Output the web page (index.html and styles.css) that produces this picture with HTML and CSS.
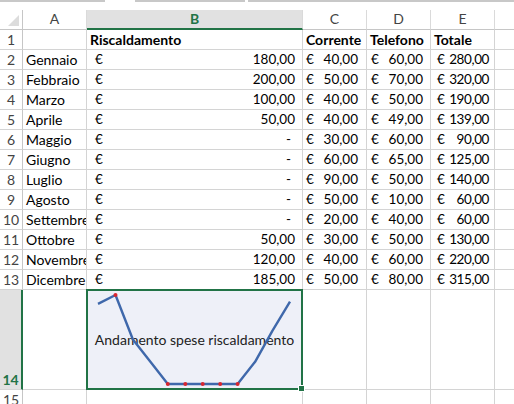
FILE: index.html
```html
<!DOCTYPE html>
<html lang="it">
<head>
<meta charset="utf-8">
<title>Foglio spese</title>
<link rel="stylesheet" href="styles.css">
</head>
<body>
<div class="topbar">
  <span class="seg seg1"></span>
  <span class="seg seg2"></span>
  <span class="seg seg3"></span>
</div>
<div class="sheet">
  <div class="corner"><span class="tri"></span></div>
  <div class="colhdr">A</div>
  <div class="colhdr sel">B</div>
  <div class="colhdr">C</div>
  <div class="colhdr">D</div>
  <div class="colhdr">E</div>
  <div class="colhdr last"></div>

  <div class="rowhdr">1</div>
  <div class="cell txt"></div>
  <div class="cell txt bold">Riscaldamento</div>
  <div class="cell txt bold">Corrente</div>
  <div class="cell txt bold">Telefono</div>
  <div class="cell txt bold">Totale</div>
  <div class="cell last"></div>

  <div class="rowhdr">2</div>
  <div class="cell txt">Gennaio</div>
  <div class="cell acc b"><span>€</span><span>180,00</span></div>
  <div class="cell acc c"><span>€</span><span>40,00</span></div>
  <div class="cell acc d"><span>€</span><span>60,00</span></div>
  <div class="cell acc e"><span>€</span><span>280,00</span></div>
  <div class="cell last"></div>

  <div class="rowhdr">3</div>
  <div class="cell txt">Febbraio</div>
  <div class="cell acc b"><span>€</span><span>200,00</span></div>
  <div class="cell acc c"><span>€</span><span>50,00</span></div>
  <div class="cell acc d"><span>€</span><span>70,00</span></div>
  <div class="cell acc e"><span>€</span><span>320,00</span></div>
  <div class="cell last"></div>

  <div class="rowhdr">4</div>
  <div class="cell txt">Marzo</div>
  <div class="cell acc b"><span>€</span><span>100,00</span></div>
  <div class="cell acc c"><span>€</span><span>40,00</span></div>
  <div class="cell acc d"><span>€</span><span>50,00</span></div>
  <div class="cell acc e"><span>€</span><span>190,00</span></div>
  <div class="cell last"></div>

  <div class="rowhdr">5</div>
  <div class="cell txt">Aprile</div>
  <div class="cell acc b"><span>€</span><span>50,00</span></div>
  <div class="cell acc c"><span>€</span><span>40,00</span></div>
  <div class="cell acc d"><span>€</span><span>49,00</span></div>
  <div class="cell acc e"><span>€</span><span>139,00</span></div>
  <div class="cell last"></div>

  <div class="rowhdr">6</div>
  <div class="cell txt">Maggio</div>
  <div class="cell acc b"><span>€</span><span class="dash">-</span></div>
  <div class="cell acc c"><span>€</span><span>30,00</span></div>
  <div class="cell acc d"><span>€</span><span>60,00</span></div>
  <div class="cell acc e"><span>€</span><span>90,00</span></div>
  <div class="cell last"></div>

  <div class="rowhdr">7</div>
  <div class="cell txt">Giugno</div>
  <div class="cell acc b"><span>€</span><span class="dash">-</span></div>
  <div class="cell acc c"><span>€</span><span>60,00</span></div>
  <div class="cell acc d"><span>€</span><span>65,00</span></div>
  <div class="cell acc e"><span>€</span><span>125,00</span></div>
  <div class="cell last"></div>

  <div class="rowhdr">8</div>
  <div class="cell txt">Luglio</div>
  <div class="cell acc b"><span>€</span><span class="dash">-</span></div>
  <div class="cell acc c"><span>€</span><span>90,00</span></div>
  <div class="cell acc d"><span>€</span><span>50,00</span></div>
  <div class="cell acc e"><span>€</span><span>140,00</span></div>
  <div class="cell last"></div>

  <div class="rowhdr">9</div>
  <div class="cell txt">Agosto</div>
  <div class="cell acc b"><span>€</span><span class="dash">-</span></div>
  <div class="cell acc c"><span>€</span><span>50,00</span></div>
  <div class="cell acc d"><span>€</span><span>10,00</span></div>
  <div class="cell acc e"><span>€</span><span>60,00</span></div>
  <div class="cell last"></div>

  <div class="rowhdr">10</div>
  <div class="cell txt">Settembre</div>
  <div class="cell acc b"><span>€</span><span class="dash">-</span></div>
  <div class="cell acc c"><span>€</span><span>20,00</span></div>
  <div class="cell acc d"><span>€</span><span>40,00</span></div>
  <div class="cell acc e"><span>€</span><span>60,00</span></div>
  <div class="cell last"></div>

  <div class="rowhdr">11</div>
  <div class="cell txt">Ottobre</div>
  <div class="cell acc b"><span>€</span><span>50,00</span></div>
  <div class="cell acc c"><span>€</span><span>30,00</span></div>
  <div class="cell acc d"><span>€</span><span>50,00</span></div>
  <div class="cell acc e"><span>€</span><span>130,00</span></div>
  <div class="cell last"></div>

  <div class="rowhdr">12</div>
  <div class="cell txt">Novembre</div>
  <div class="cell acc b"><span>€</span><span>120,00</span></div>
  <div class="cell acc c"><span>€</span><span>40,00</span></div>
  <div class="cell acc d"><span>€</span><span>60,00</span></div>
  <div class="cell acc e"><span>€</span><span>220,00</span></div>
  <div class="cell last"></div>

  <div class="rowhdr">13</div>
  <div class="cell txt">Dicembre</div>
  <div class="cell acc b"><span>€</span><span>185,00</span></div>
  <div class="cell acc c"><span>€</span><span>50,00</span></div>
  <div class="cell acc d"><span>€</span><span>80,00</span></div>
  <div class="cell acc e"><span>€</span><span>315,00</span></div>
  <div class="cell last"></div>

  <div class="rowhdr selrow">14</div>
  <div class="cell"></div>
  <div class="cell spark">
    <span class="spark-title">Andamento spese riscaldamento</span>
    <svg class="spark-svg" width="214" height="98" viewBox="0 0 214 98">
      <polyline fill="none" stroke="#3f68ab" stroke-width="2.4" stroke-linejoin="round"
        points="11,13.9 28.5,5 45.9,49.5 63.4,71.8 80.8,94 98.3,94 115.7,94 133.2,94 150.6,94 168.1,71.8 185.5,40.6 203,11.7"/>
      <g fill="#d9262e">
        <circle cx="28.5" cy="5" r="2"/>
        <circle cx="80.8" cy="94" r="2"/>
        <circle cx="98.3" cy="94" r="2"/>
        <circle cx="115.7" cy="94" r="2"/>
        <circle cx="133.2" cy="94" r="2"/>
        <circle cx="150.6" cy="94" r="2"/>
      </g>
    </svg>
    <span class="selbox"></span>
    <span class="handle"></span>
  </div>
  <div class="cell"></div>
  <div class="cell"></div>
  <div class="cell"></div>
  <div class="cell last"></div>

  <div class="rowhdr">15</div>
  <div class="cell"></div>
  <div class="cell"></div>
  <div class="cell"></div>
  <div class="cell"></div>
  <div class="cell"></div>
  <div class="cell last"></div>
</div>
</body>
</html>
```
FILE: styles.css
```css
html, body {
  margin: 0;
  padding: 0;
  background: #ffffff;
}
body {
  font-family: Lato, "Liberation Sans", sans-serif;
  font-size: 14px;
  color: #000;
  overflow: hidden;
}
.topbar {
  display: flex;
  height: 10px;
  gap: 0;
}
.seg {
  display: block;
  height: 2px;
  background: #c8c8c8;
}
.seg1 { width: 105px; }
.seg2 { width: 110px; margin-left: 30px; }
.seg3 { flex: 1; margin-left: 3px; }

.sheet {
  display: grid;
  grid-template-columns: 23px 64px 216px 64px 64px 64px 1fr;
  grid-template-rows: 20px repeat(13, 20px) 100px 20px;
}
.sheet > div {
  box-sizing: border-box;
  min-width: 0;
}
.corner {
  border-right: 1px solid #c6c6c6;
  border-bottom: 1px solid #c6c6c6;
  position: relative;
}
.tri {
  position: absolute;
  right: 3px;
  bottom: 3px;
  width: 0;
  height: 0;
  border-left: 11px solid transparent;
  border-bottom: 11px solid #dcdcdc;
}
.colhdr {
  border-right: 1px solid #dadada;
  border-bottom: 1px solid #c6c6c6;
  color: #444;
  text-align: center;
  line-height: 18px;
  font-size: 14px;
}
.colhdr.sel {
  background: #e1e1e1;
  color: #217346;
  font-weight: bold;
  border-bottom: 2px solid #217346;
}
.colhdr.last { border-right: none; }
.rowhdr {
  border-right: 1px solid #c6c6c6;
  border-bottom: 1px solid #d4d4d4;
  color: #444;
  text-align: center;
  line-height: 19px;
  font-size: 14px;
  display: flex;
  align-items: flex-end;
  justify-content: center;
}
.rowhdr.selrow {
  background: #e1e1e1;
  color: #217346;
  font-weight: bold;
  border-right: 2px solid #217346;
}
.cell {
  border-right: 1px solid #d4d4d4;
  border-bottom: 1px solid #d4d4d4;
  line-height: 19px;
  white-space: nowrap;
  overflow: hidden;
}
.cell.last { border-right: none; }
.txt { padding-left: 3px; }
.bold { font-weight: bold; }
.acc {
  display: flex;
  justify-content: space-between;
  font-size: 13.5px;
}
.acc.b { padding: 0 7px 0 8px; }
.acc.c { padding: 0 8px 0 3px; }
.acc.d { padding: 0 7px 0 4px; }
.acc.e {
  padding: 0 5px 0 6px;
  gap: 3px;
  letter-spacing: -0.4px;
}
.dash { padding-right: 4px; }

.spark {
  position: relative;
  overflow: visible;
  background: #eef0f8;
  display: flex;
  align-items: center;
  justify-content: center;
}
.spark-title {
  color: #222;
  font-size: 14px;
  line-height: 18px;
}
.spark-svg {
  position: absolute;
  left: 0;
  top: 0;
}
.selbox {
  position: absolute;
  left: -1px;
  top: -1px;
  right: -1px;
  bottom: -1px;
  border: 2px solid #217346;
}
.handle {
  position: absolute;
  right: -3px;
  bottom: -3px;
  width: 5px;
  height: 5px;
  background: #217346;
  border: 1px solid #fff;
}
```
